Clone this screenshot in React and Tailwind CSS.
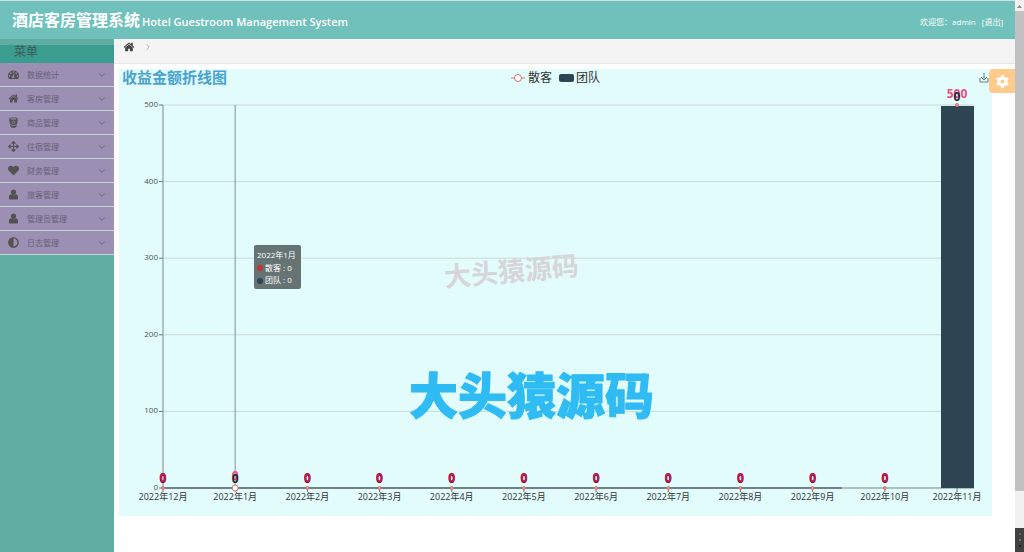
import { FaAdjust, FaArrowsAlt, FaCog, FaHeart } from 'react-icons/fa';
import { FiChevronDown, FiChevronRight } from 'react-icons/fi';

const HomeIcon = ({ className }) => (
  <svg viewBox="0 0 1792 1792" className={className} fill="currentColor" aria-hidden="true">
    <path d="M1472 992v480q0 26-19 45t-45 19h-384v-384h-256v384h-384q-26 0-45-19t-19-45v-480q0-1 .5-3t.5-3l575-474 575 474q1 2 1 6zm223-69l-62 74q-8 9-21 11h-3q-13 0-21-7l-692-577-692 577q-12 8-24 7-13-2-21-11l-62-74q-8-10-7-23.500t11-21.500l719-599q32-26 76-26t76 26l244 204v-195q0-14 9-23t23-9h192q14 0 23 9t9 23v408l219 182q10 8 11 21.500t-7 23.500z" />
  </svg>
);

const DashboardIcon = ({ className }) => (
  <svg viewBox="0 0 24 24" className={className} aria-hidden="true">
    <path fill="currentColor" d="M12 3A12 12 0 0 0 0 15q0 3.500 1.900 6.300.3.500.9.500h18.400q.6 0 .9-.5Q24 18.500 24 15A12 12 0 0 0 12 3z" />
    <g fill="#9b8fb3">
      <circle cx="3.600" cy="15" r="1.700" />
      <circle cx="6.200" cy="9" r="1.700" />
      <circle cx="12" cy="6.500" r="1.700" />
      <circle cx="17.800" cy="9" r="1.700" />
      <circle cx="20.400" cy="15" r="1.700" />
      <path d="M12.600 9.500l1.500.4-1.300 5.100a2.600 2.600 0 1 1-1.500-.4z" />
    </g>
  </svg>
);

const BucketIcon = ({ className }) => (
  <svg viewBox="0 0 24 24" className={className} aria-hidden="true">
    <path fill="currentColor" d="M2.500 4.500C2.500 2 7 1 12 1s9.500 1 9.500 3.500L19.800 15c-2 1.600-5 2.300-7.800 2.300S6.200 16.600 4.200 15z" />
    <path fill="currentColor" d="M4.600 17c2 1.300 4.700 1.900 7.400 1.900s5.400-.6 7.400-1.900l-.7 3.600C18.400 22.500 15 23.500 12 23.500s-6.400-1-6.700-2.900z" />
    <ellipse cx="12" cy="4.300" rx="6.800" ry="1.400" fill="#9b8fb3" />
    <circle cx="12" cy="11.500" r="2.800" fill="none" stroke="#9b8fb3" strokeWidth="1.400" />
  </svg>
);

const UserIcon = ({ className }) => (
  <svg viewBox="0 0 24 24" className={className} fill="currentColor" aria-hidden="true">
    <ellipse cx="12" cy="7" rx="5.500" ry="6" />
    <path d="M7 11.500c1.400 1.600 3 2.300 5 2.300s3.600-.7 5-2.300c3.600.3 5 4 5 8 0 2.300-1.300 3.500-3.300 3.500H5.300C3.300 23 2 21.800 2 19.500c0-4 1.400-7.700 5-8z" />
  </svg>
);

const menuItems = [
  { label: '数据统计', icon: DashboardIcon },
  { label: '客房管理', icon: HomeIcon },
  { label: '商品管理', icon: BucketIcon },
  { label: '住宿管理', icon: FaArrowsAlt },
  { label: '财务管理', icon: FaHeart },
  { label: '旅客管理', icon: UserIcon },
  { label: '管理员管理', icon: UserIcon },
  { label: '日志管理', icon: FaAdjust }
];

const months = [
  '2022年12月', '2022年1月', '2022年2月', '2022年3月', '2022年4月', '2022年5月',
  '2022年6月', '2022年7月', '2022年8月', '2022年9月', '2022年10月', '2022年11月'
];

const ticks = [0, 100, 200, 300, 400, 500];

// plot area inside the 873 x 447 chart
const LEFT = 44;
const RIGHT = 838;
const TOP = 36;
const BOTTOM = 419;

const xOf = (i) => LEFT + (i * (RIGHT - LEFT)) / (months.length - 1);
const yOf = (v) => BOTTOM - (v * (BOTTOM - TOP)) / 500;

const Header = () => (
  <header className="flex h-[39px] items-center justify-between border-t border-[#d5dfde] bg-[#70c1bb] px-3 text-white">
    <h1 className="flex items-baseline gap-0.5">
      <span className="text-[16px] font-bold">酒店客房管理系统</span>
      <span className="text-[11px] font-semibold">Hotel Guestroom Management System</span>
    </h1>
    <div className="flex gap-1.5 pt-1 text-[8px]">
      <span>欢迎您：admin</span>
      <a href="#logout">[退出]</a>
    </div>
  </header>
);

const Sidebar = () => (
  <nav className="w-[114px] shrink-0 bg-[#60ada4]">
    <h2 className="mt-1.5 h-[18px] bg-[#3a9d8f] pl-3.5 text-[12px] leading-[14px] text-[#3f5652]">菜单</h2>
    <ul>
      {menuItems.map(({ label, icon: Icon }) => (
        <li key={label}>
          <button
            type="button"
            className="flex h-6 w-full items-center border-b border-[#c3d3d8] bg-[#9b8fb3] pr-[7px] pl-2 text-left text-[8px] text-[#676074]"
          >
            <Icon className="mr-2 size-[11px] shrink-0 text-[#525252]" />
            <span className="flex-1">{label}</span>
            <FiChevronDown className="size-[10px]" />
          </button>
        </li>
      ))}
    </ul>
  </nav>
);

const Tooltip = () => (
  <g fill="#fff" fontSize="8">
    <rect x="135" y="176" width="47" height="44" rx="2" fill="#5f6b6b" fillOpacity="0.95" />
    <text x="138" y="189">2022年1月</text>
    <circle cx="141" cy="199" r="3" fill="#c23531" />
    <text x="146" y="202">散客 : 0</text>
    <circle cx="141" cy="212" r="3" fill="#2f4554" />
    <text x="146" y="214">团队 : 0</text>
  </g>
);

const IncomeChart = () => (
  <svg
    viewBox="0 0 873 447"
    className="block w-full overflow-visible bg-[#e2fcfc]"
    role="img"
    aria-label="收益金额折线图"
  >
    <text x="3" y="14" fontSize="15" fontWeight="700" fill="#48a3cf">收益金额折线图</text>

    {/* legend */}
    <path d="M392 9h14" stroke="#d6706d" />
    <circle cx="399" cy="9" r="3.500" fill="#fff" stroke="#d6706d" />
    <text x="409" y="13" fontSize="12" fill="#333">散客</text>
    <rect x="440" y="5" width="15" height="8" rx="2" fill="#2f4554" />
    <text x="457" y="13" fontSize="12" fill="#333">团队</text>

    {/* save button */}
    <path d="M865 4v7M862 8l3 3 3-3M861 9v4h8V9" fill="none" stroke="#6b7b7c" />

    {ticks.map((t) => (
      <g key={t}>
        {t > 0 && <path d={`M${LEFT} ${yOf(t)}H${RIGHT + 17}`} stroke="#ccd9d6" />}
        <path d={`M${LEFT - 4} ${yOf(t)}h4`} stroke="#6a7777" />
        <text x={LEFT - 5} y={yOf(t) + 2} fontSize="8" textAnchor="end" fill="#4b5555">{t}</text>
      </g>
    ))}

    <path d={`M${LEFT} ${TOP}V${BOTTOM}`} stroke="#7b8888" />
    <path d={`M${xOf(1)} ${TOP}V${BOTTOM}`} stroke="#849090" />
    <path d={`M${LEFT} ${BOTTOM}H${RIGHT + 17}`} stroke="#788484" />
    <path d={`M${LEFT} ${BOTTOM}H723`} stroke="#5d6e75" strokeWidth="1.500" />
    <rect x="822" y="37" width="33" height="382" fill="#2f4554" />

    {months.map((m, i) => {
      const last = i === months.length - 1;
      const hovered = i === 1;
      return (
        <g key={m} textAnchor="middle">
          <path d={`M${xOf(i)} ${BOTTOM}v4`} stroke="#6a7777" />
          <text x={xOf(i)} y="431" fontSize="9" fill="#333">{m}</text>
          <text x={xOf(i)} y={last ? 29 : hovered ? 411 : 413} fontSize="12" fontWeight="700" fill="#ed4b83">
            {last ? 500 : 0}
          </text>
          <text
            x={xOf(i)}
            y={last ? 32 : 414}
            fontSize="12"
            fontWeight="700"
            fill={last || hovered ? '#26222f' : '#5a1236'}
          >
            0
          </text>
          {!last && !hovered && (
            <text x={xOf(i)} y="413" fontSize="12" fontWeight="700" fill="#c2184f">0</text>
          )}
          <circle
            cx={xOf(i)}
            cy={last ? TOP : BOTTOM}
            r={hovered ? 3 : 1.5}
            fill={hovered ? '#fff' : '#eb9b97'}
            stroke="#d6706d"
          />
        </g>
      );
    })}

    {/* watermarks */}
    <text x="326" y="218" fontSize="27" fontWeight="700" fill="#d6d6d8" transform="rotate(-5 326 218)">
      大头猿源码
    </text>
    <text
      x="290"
      y="345"
      fontSize="49"
      fontWeight="900"
      fill="#2fbbf3"
      stroke="#2fbbf3"
      strokeLinejoin="round"
    >
      大头猿源码
    </text>

    <Tooltip />
  </svg>
);

const ScrollRail = () => (
  <div className="flex w-[9px] shrink-0 flex-col bg-[#f1f1f1]" aria-hidden="true">
    <svg viewBox="0 0 9 11" className="h-[11px]">
      <path d="M2 8l2.500-3L7 8z" fill="#8b8b8b" />
    </svg>
    <div className="basis-[87%] bg-[#c1c1c1]" />
    <div className="mt-auto flex h-6 flex-col items-center justify-center gap-1 bg-[#414141]">
      <span className="size-0.5 bg-[#666]" />
      <span className="size-0.5 bg-[#8a6a55]" />
      <span className="size-0.5 bg-[#222]" />
    </div>
  </div>
);

const App = () => (
  <div className="flex min-h-screen bg-white font-['Open_Sans','Noto_Sans_CJK_SC',sans-serif]">
    <div className="flex min-w-0 flex-1 flex-col">
      <Header />
      <div className="flex flex-1">
        <Sidebar />
        <main className="min-w-0 flex-1">
          <div className="flex h-[25px] items-start gap-2 border-b border-[#e8e8e8] bg-[#f4f4f4] px-[9px] pt-0.5">
            <a href="#home" aria-label="首页">
              <HomeIcon className="size-3 text-[#454545]" />
            </a>
            <FiChevronRight className="mt-px size-[10px] text-[#aaa]" />
          </div>
          <div className="relative pt-[5px] pr-[23px] pl-[5px]">
            <IncomeChart />
            <button
              type="button"
              aria-label="设置"
              className="absolute top-[5px] right-0 flex h-6 w-[26px] items-center justify-center rounded-l-sm bg-[#fecb8b] text-white"
            >
              <FaCog className="size-[13px]" />
            </button>
          </div>
        </main>
      </div>
    </div>
    <ScrollRail />
  </div>
);

export default App;
